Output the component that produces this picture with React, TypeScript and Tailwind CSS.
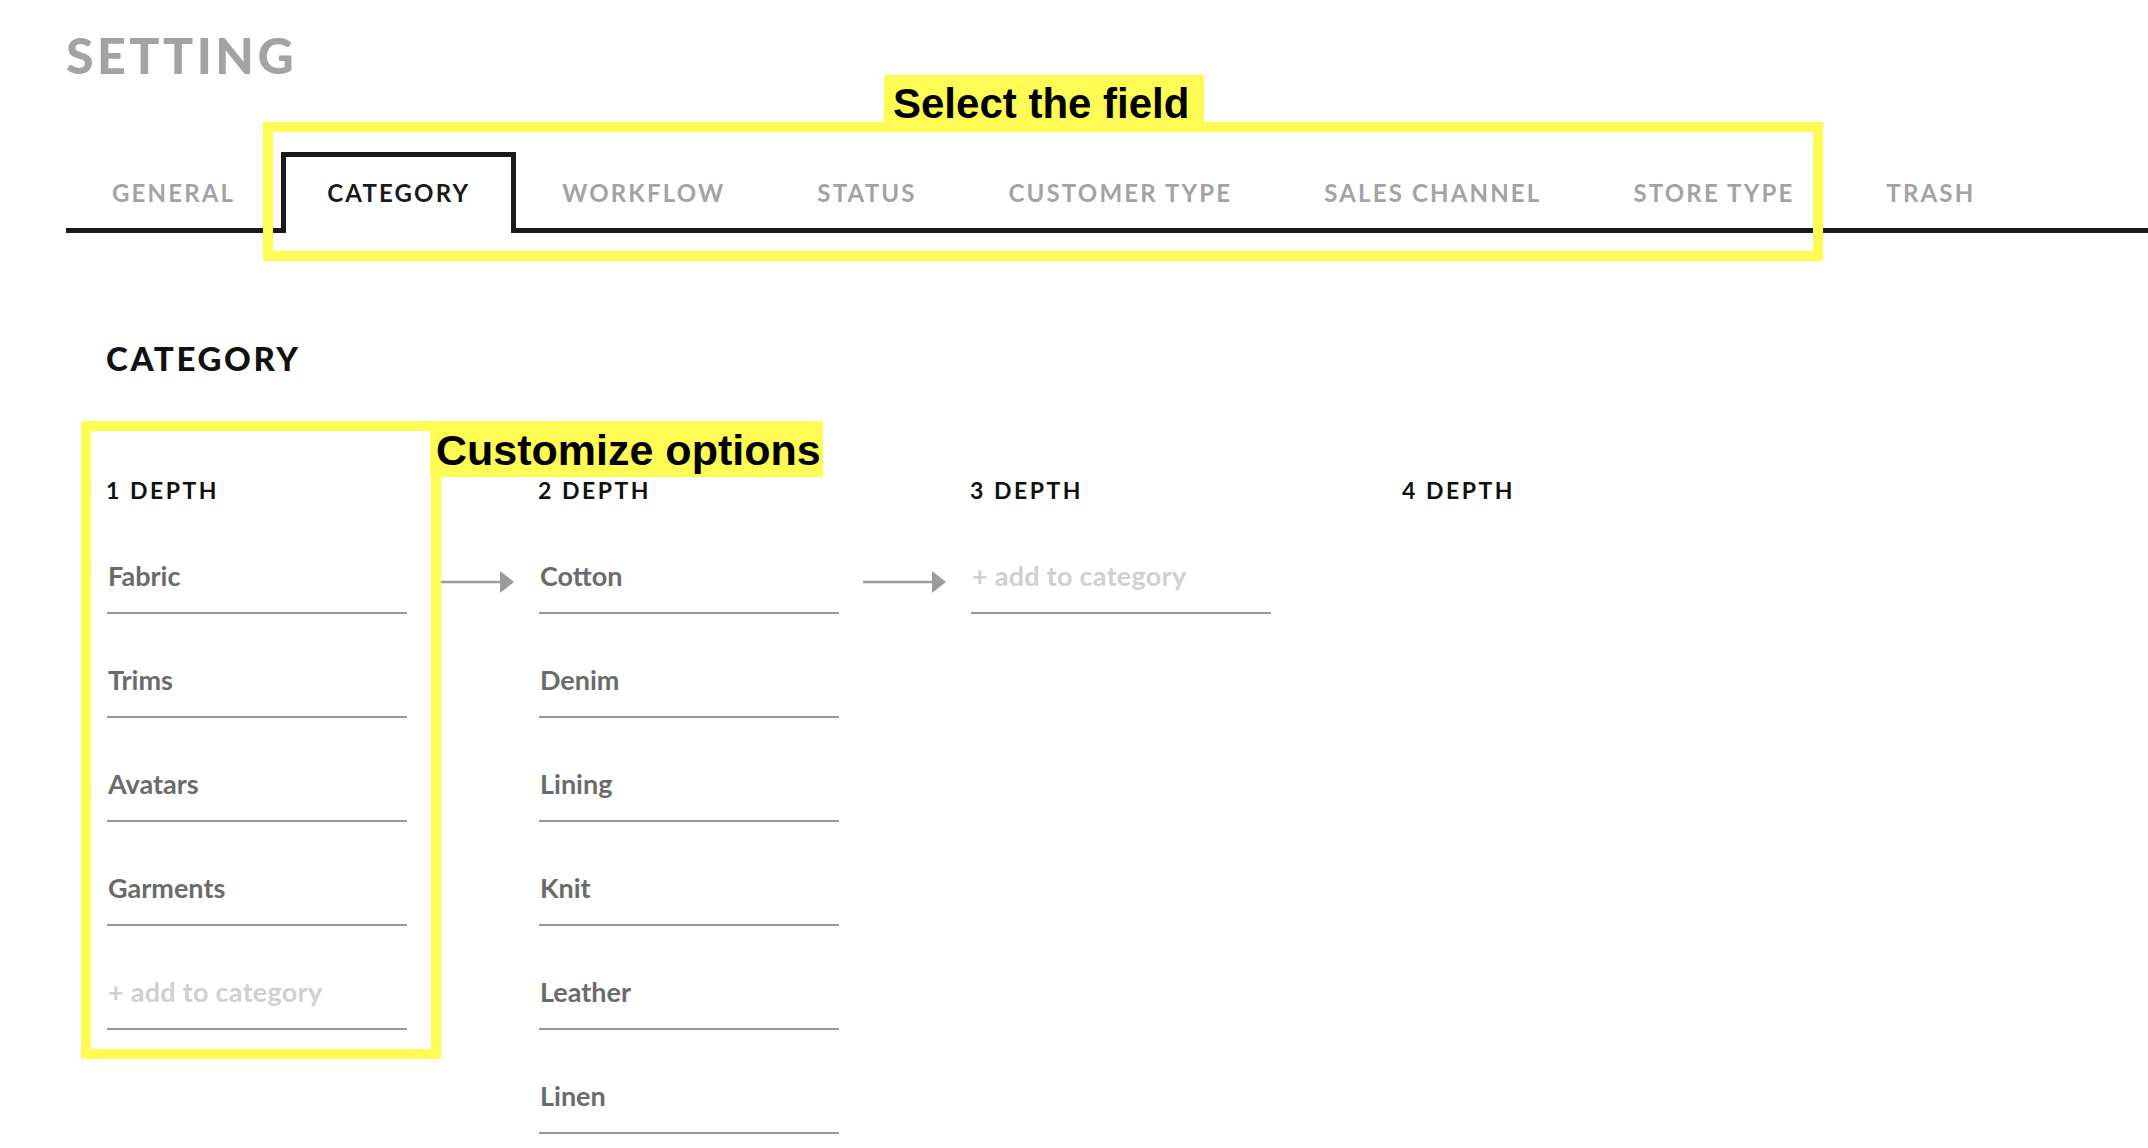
import React from 'react';

const tabs = [
  'GENERAL',
  'CATEGORY',
  'WORKFLOW',
  'STATUS',
  'CUSTOMER TYPE',
  'SALES CHANNEL',
  'STORE TYPE',
  'TRASH',
];

const columns = [
  { title: '1 DEPTH', items: ['Fabric', 'Trims', 'Avatars', 'Garments'], add: true, arrow: true },
  { title: '2 DEPTH', items: ['Cotton', 'Denim', 'Lining', 'Knit', 'Leather', 'Linen'], add: false, arrow: true },
  { title: '3 DEPTH', items: [], add: true, arrow: false },
  { title: '4 DEPTH', items: [], add: false, arrow: false },
];

function Arrow() {
  return (
    <svg width="83" height="24" viewBox="0 0 83 24">
      <line x1="0" y1="12" x2="71" y2="12" stroke="#9b9b9b" strokeWidth="2.5" />
      <polygon points="69,1 83,12 69,23" fill="#9b9b9b" />
    </svg>
  );
}

export default function App() {
  const activeTab = 'CATEGORY';

  return (
    <div className="relative min-h-[1148px] overflow-hidden bg-white font-['Lato',sans-serif]">
      <div className="pl-[66px] pt-[30px]">
        <h1 className="text-[50px] leading-[50px] font-black tracking-[0.07em] text-[#a3a3a3]">
          SETTING
        </h1>

        {/* Tabs */}
        <nav className="mt-[72px] flex border-b-[5px] border-[#1a1a1a]">
          {tabs.map(tab => {
            const active = tab === activeTab;
            return (
              <div
                key={tab}
                className={`-mb-[5px] border-x-[5px] border-t-[5px] px-[41px] pt-[22px] pb-[26px] text-[24px] leading-[28px] font-bold tracking-[0.09em] whitespace-nowrap ${
                  active
                    ? 'border-[#1a1a1a] bg-white text-[#1a1a1a]'
                    : 'border-transparent text-[#a3a3a3]'
                }`}
              >
                {tab}
              </div>
            );
          })}
        </nav>

        {/* Category section */}
        <section className="ml-[40px] mt-[106px]">
          <h2 className="text-[33px] leading-[38px] font-black tracking-[0.08em] text-[#111]">
            CATEGORY
          </h2>

          <div className="mt-[99px] flex">
            {columns.map(col => (
              <div key={col.title} className="w-[432px] shrink-0">
                <h3 className="text-[23px] leading-[28px] font-bold tracking-[0.11em] text-[#111]">
                  {col.title}
                </h3>
                <div className="mt-[6px] flex">
                  {(col.items.length > 0 || col.add) && (
                    <ul className="ml-[1px] w-[300px] shrink-0">
                      {col.items.map(item => (
                        <li
                          key={item}
                          className="border-b-2 border-[#9a9a9a] pt-[49px] pb-[19px] pl-[1px] text-[27px] leading-[34px] font-bold text-[#6b6b6b]"
                        >
                          {item}
                        </li>
                      ))}
                      {col.add && (
                        <li className="border-b-2 border-[#9a9a9a] pt-[49px] pb-[19px] pl-[1px] text-[27px] leading-[34px] font-bold tracking-[0.01em] text-[#d0d0d0]">
                          + add to category
                        </li>
                      )}
                    </ul>
                  )}
                  {col.arrow && (
                    <div className="pl-[24px] pt-[60px]">
                      <Arrow />
                    </div>
                  )}
                </div>
              </div>
            ))}
          </div>
        </section>
      </div>

      {/* Annotations */}
      <div className="pointer-events-none absolute left-[263px] top-[122px] h-[139px] w-[1560px] border-[10px] border-[#fdfb54]" />
      <div className="absolute left-[884px] top-[75px] h-[52px] w-[320px] bg-[#fdfb54] pl-[9px] pt-[8px] font-['Liberation_Sans',Arial,sans-serif] text-[42px] leading-[42px] font-bold text-black">
        Select the field
      </div>
      <div className="pointer-events-none absolute left-[81px] top-[421px] h-[638px] w-[360px] border-[10px] border-[#fdfb54]" />
      <div className="absolute left-[430px] top-[421px] h-[56px] w-[393px] bg-[#fdfb54] pl-[6px] pt-[8px] font-['Liberation_Sans',Arial,sans-serif] text-[43px] leading-[42px] font-bold text-black whitespace-nowrap">
        Customize options
      </div>
    </div>
  );
}
